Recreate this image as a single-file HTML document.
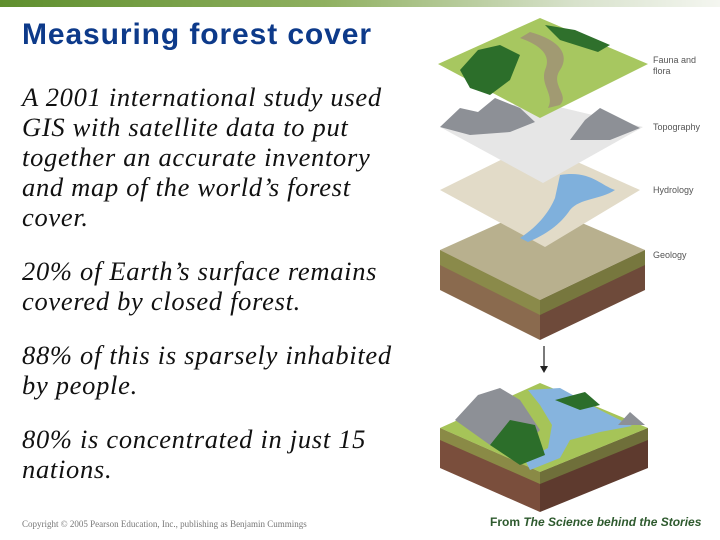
<!DOCTYPE html>
<html><head><style>
body{margin:0;width:720px;height:540px;background:#fff;position:relative;overflow:hidden;font-family:"Liberation Sans",sans-serif}
.bar{position:absolute;left:0;top:0;width:720px;height:7px;background:linear-gradient(90deg,#5f8f2e,#8fb060 45%,#d8e2cc 80%,#f4f6f0)}
h1{position:absolute;left:22px;top:18px;margin:0;font-size:30px;font-weight:bold;color:#0d3a8a;letter-spacing:0.9px}
.t{position:absolute;left:22px;font-family:"Liberation Serif",serif;font-style:italic;font-size:26.5px;letter-spacing:0.7px;line-height:30px;color:#111}
.copy{position:absolute;left:22px;top:519px;font-family:"Liberation Serif",serif;font-size:9px;color:#777}
.from{position:absolute;left:490px;top:515px;font-size:12px;color:#2e5a2e;font-weight:bold}
.lab{position:absolute;font-size:9px;color:#555}
</style></head><body>
<div class="bar"></div>
<h1>Measuring forest cover</h1>
<div class="t" style="top:82px">A 2001 international study used<br>GIS with satellite data to put<br>together an accurate inventory<br>and map of the world’s forest<br>cover.</div>
<div class="t" style="top:256px">20% of Earth’s surface remains<br>covered by closed forest.</div>
<div class="t" style="top:340px">88% of this is sparsely inhabited<br>by people.</div>
<div class="t" style="top:424px">80% is concentrated in just 15<br>nations.</div>
<div class="copy">Copyright © 2005 Pearson Education, Inc., publishing as Benjamin Cummings</div>
<div class="from">From <i>The Science behind the Stories</i></div>
<div class="lab" style="left:653px;top:55px;line-height:11px">Fauna and<br>flora</div>
<div class="lab" style="left:653px;top:122px">Topography</div>
<div class="lab" style="left:653px;top:185px">Hydrology</div>
<div class="lab" style="left:653px;top:250px">Geology</div>
<svg width="720" height="540" style="position:absolute;left:0;top:0">
<polygon points="440,250 540,300 540,340 440,290" fill="#8a6a4e"/>
<polygon points="540,300 645,250 645,290 540,340" fill="#6e4a3a"/>
<polygon points="440,250 540,300 540,315 440,265" fill="#8a8a4a"/>
<polygon points="540,300 645,250 645,265 540,315" fill="#77773e"/>
<polygon points="440,250 540,205 645,250 540,300" fill="#b8b08e"/>
<polygon points="440,190 535,143 640,190 545,247" fill="#e2dbc8"/>
<path d="M560,175 C590,170 600,185 615,190 C600,200 580,198 570,210 C560,225 545,235 528,242 L520,238 C540,225 550,210 555,198 Z" fill="#7fb0dc"/>
<polygon points="440,127 530,100 643,127 543,183" fill="#e6e6e6"/>
<path d="M440,127 L460,108 L478,112 L495,98 L520,108 L535,122 L510,132 L470,135 Z" fill="#8d9096"/>
<path d="M570,140 L585,120 L600,108 L620,118 L640,128 L610,140 Z" fill="#8d9096"/>
<polygon points="438,64 540,18 648,64 540,118" fill="#a7c760"/>
<path d="M530,32 C560,40 570,55 560,70 C550,85 570,95 560,105 L548,108 C555,95 540,85 545,70 C552,55 540,45 520,38 Z" fill="#a19a72"/>
<path d="M460,70 L478,50 L500,45 L520,55 L510,80 L490,95 L470,88 Z" fill="#2c6e2a"/>
<path d="M545,25 L575,30 L610,45 L598,52 L560,40 Z" fill="#2f702c"/>
<line x1="544" y1="346" x2="544" y2="368" stroke="#222" stroke-width="1.2"/>
<polygon points="540,366 548,366 544,373" fill="#222"/>
<polygon points="440,428 540,472 540,512 440,468" fill="#7a4e3c"/>
<polygon points="540,472 648,428 648,468 540,512" fill="#5e3a2e"/>
<polygon points="440,428 540,472 540,484 440,440" fill="#8a8a46"/>
<polygon points="540,472 648,428 648,440 540,484" fill="#6f6f3a"/>
<polygon points="440,428 540,383 648,428 540,472" fill="#a6c458"/>
<path d="M528,390 L560,388 L600,410 L632,426 L600,432 L570,440 L560,458 L530,470 L525,460 L548,448 L552,425 L540,405 Z" fill="#86b4de"/>
<path d="M455,420 L478,395 L500,388 L520,400 L540,430 L520,450 L490,445 Z" fill="#8d9096"/>
<path d="M490,445 L510,420 L535,425 L545,455 L520,465 Z" fill="#2c6e2a"/>
<path d="M555,400 L585,392 L600,405 L580,410 Z" fill="#2c6e2a"/>
<path d="M618,425 L630,412 L645,425 Z" fill="#8d9096"/>
</svg>
</body></html>
